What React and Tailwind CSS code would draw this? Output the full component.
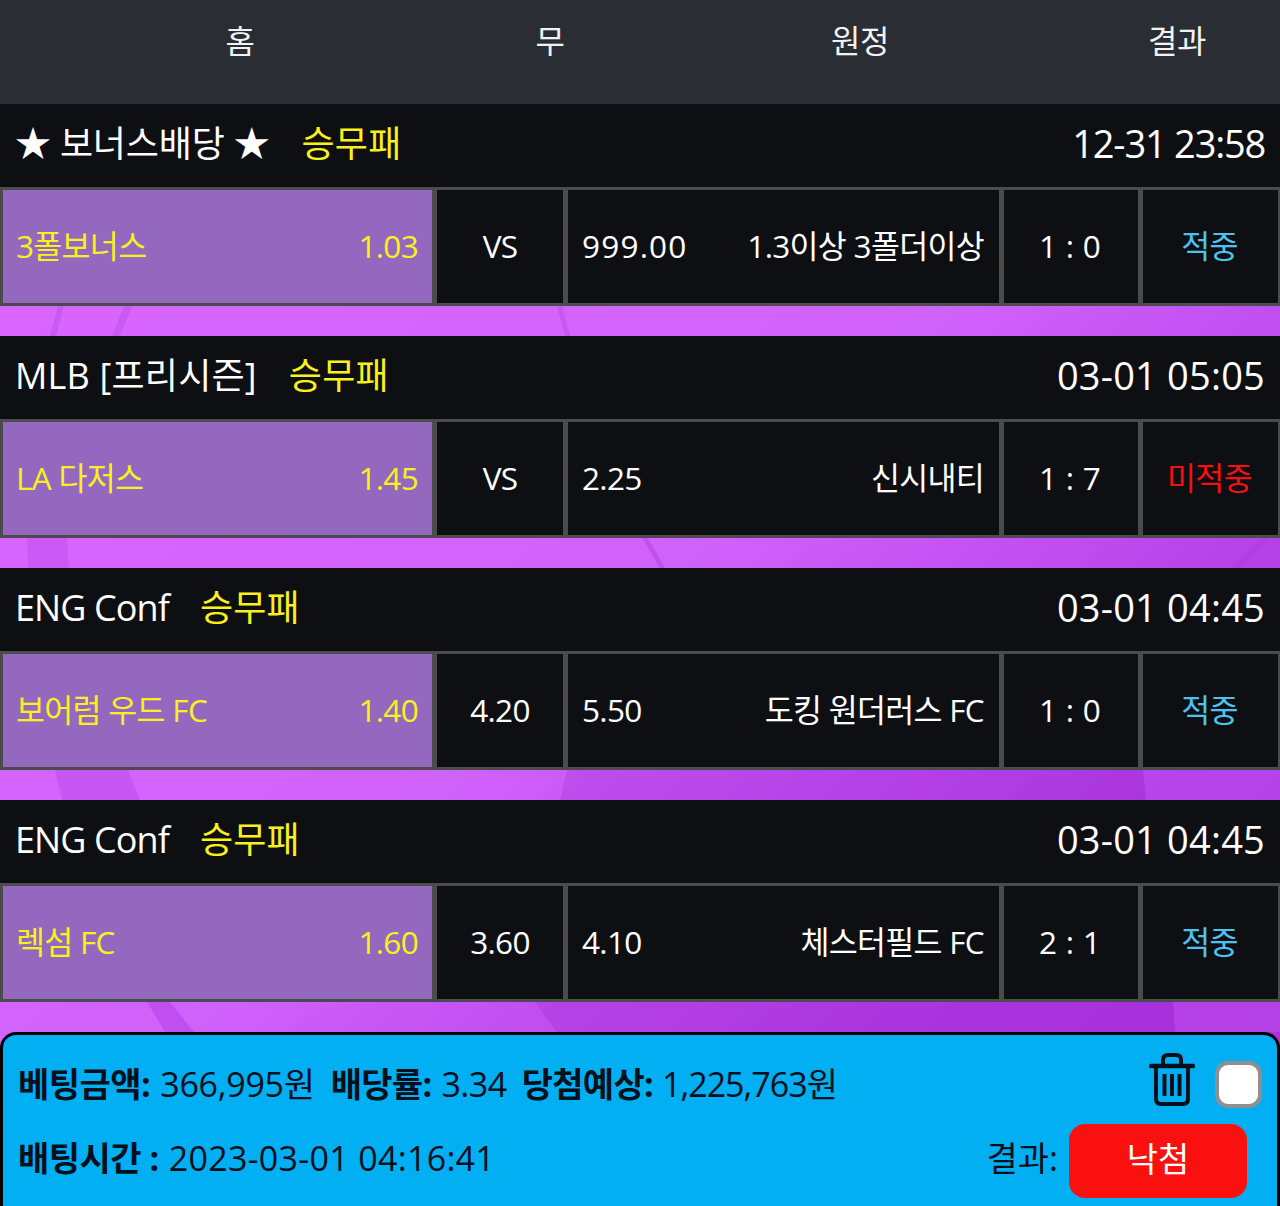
import React from "react";

const FONT = "font-['Open_Sans','Noto_Sans_CJK_KR',sans-serif]";

const games = [
  { league: "★ 보너스배당 ★", leagueClass: "tracking-[-0.2px]", typeClass: "ml-[32px]", type: "승무패", time: "12-31 23:58", timeClass: "tracking-[-1.2px]", home: "3폴보너스", homeOdds: "1.03", draw: "VS", awayOdds: "999.00", oddsClass: "tracking-[1.2px]", away: "1.3이상 3폴더이상", score: "1 : 0", result: "적중" },
  { league: "MLB [프리시즌]", leagueClass: "tracking-[0.2px]", typeClass: "ml-[32px]", type: "승무패", time: "03-01 05:05", timeClass: "tracking-[0.2px]", home: "LA 다저스", homeOdds: "1.45", draw: "VS", awayOdds: "2.25", oddsClass: "", away: "신시내티", score: "1 : 7", result: "미적중" },
  { league: "ENG Conf", leagueClass: "tracking-[-0.9px]", typeClass: "ml-[31px]", type: "승무패", time: "03-01 04:45", timeClass: "tracking-[0.2px]", home: "보어럼 우드 FC", homeOdds: "1.40", draw: "4.20", awayOdds: "5.50", oddsClass: "", away: "도킹 원더러스 FC", score: "1 : 0", result: "적중" },
  { league: "ENG Conf", leagueClass: "tracking-[-0.9px]", typeClass: "ml-[31px]", type: "승무패", time: "03-01 04:45", timeClass: "tracking-[0.2px]", home: "렉섬 FC", homeOdds: "1.60", draw: "3.60", awayOdds: "4.10", oddsClass: "", away: "체스터필드 FC", score: "2 : 1", result: "적중" },
];

function GameBlock({ game }) {
  return (
    <div>
      {/* league title */}
      <div className="flex h-[83px] items-center justify-between bg-[#0d0f12] pb-[4px] pl-[15px] pr-[15px] text-[36px] tracking-[-0.5px] text-white">
        <div className="flex items-center">
          <span className={game.leagueClass}>{game.league}</span>
          <span className={`${game.typeClass} tracking-[0.2px] text-[#f9f01c]`}>{game.type}</span>
        </div>
        <span className={`text-[38px] ${game.timeClass}`}>{game.time}</span>
      </div>

      {/* odds row */}
      <div className="flex h-[119px] gap-[5px] bg-[#4b4b4b] pb-[3px] pl-[3px] pr-[2px] pt-[3px] text-[31.5px] tracking-[-0.7px] text-white">
        <div className="flex w-[429px] items-center justify-between bg-[#9568c0] pb-[2px] pl-[13px] pr-[14px] text-[#f9f01c]">
          <span>{game.home}</span>
          <span>{game.homeOdds}</span>
        </div>
        <div className="flex w-[126px] items-center justify-center bg-[#0d0f12] pb-[2px]">{game.draw}</div>
        <div className="flex w-[431px] items-center justify-between bg-[#0d0f12] pb-[2px] pl-[14px] pr-[15px]">
          <span className={game.oddsClass}>{game.awayOdds}</span>
          <span>{game.away}</span>
        </div>
        <div className="flex w-[134px] items-center justify-center bg-[#0d0f12] pb-[2px] pr-[3px] [word-spacing:2px]">{game.score}</div>
        <div className={`flex flex-1 items-center justify-center bg-[#0d0f12] pb-[2px] pr-[2px] ${game.result === "적중" ? "text-[#4fc3f0]" : "text-[#f41010]"}`}>
          {game.result}
        </div>
      </div>

      <div className="h-[30px]" />
    </div>
  );
}

function BackgroundShapes() {
  // faint facets of the purple wallpaper showing through the gaps
  return (
    <svg className="absolute inset-0 h-full w-full" viewBox="0 0 1280 1206" preserveAspectRatio="none">
      <defs>
        <linearGradient id="wall" x1="0" y1="0" x2="1" y2="1">
          <stop offset="0" stopColor="#dc68ff" />
          <stop offset="0.5" stopColor="#d062fc" />
          <stop offset="0.8" stopColor="#ac36e0" />
          <stop offset="1" stopColor="#a830dc" />
        </linearGradient>
      </defs>
      <rect width="1280" height="1206" fill="url(#wall)" />
      <path d="M58 306 L50 336 L56 336 L64 306 Z M124 306 L112 336 L120 336 L132 306 Z M557 306 L565 336 L570 336 L562 306 Z" fill="#b545e6" opacity="0.4" />
      <path d="M27 538 L28 568 L69 568 L67 538 Z" fill="#b545e6" opacity="0.35" />
      <path d="M648 538 L665 568 L660 568 L642 538 Z M1262 538 L1230 568 L1240 568 L1272 538 Z" fill="#a93de0" opacity="0.45" />
      <path d="M55 770 L62 800 L140 800 L128 770 Z" fill="#a93de0" opacity="0.3" />
      <path d="M567 770 L560 800 L1146 800 L1143 770 Z" fill="#a32fd8" opacity="0.3" />
      <path d="M1143 770 L1146 800 L1280 800 L1280 770 Z" fill="#c04ff0" opacity="0.5" />
      <path d="M147 1002 L170 1002 L194 1032 L165 1032 Z M535 1002 L1173 1002 L1175 1032 L557 1032 Z" fill="#a32fd8" opacity="0.35" />
      <path d="M1173 1002 L1175 1032 L1280 1032 L1280 1002 Z" fill="#c04ff0" opacity="0.5" />
    </svg>
  );
}

function TrashIcon() {
  return (
    <svg width="46" height="54" viewBox="0 0 46 54" fill="none" stroke="#04101c" strokeWidth="4" strokeLinecap="round" strokeLinejoin="round">
      <path d="M2 13 H44" strokeWidth="4.5" />
      <path d="M14 12 V7 Q14 2 19 2 H27 Q32 2 32 7 V12" />
      <path d="M7 14 V46 Q7 51 12 51 H34 Q39 51 39 46 V14" />
      <path d="M15.500 21 V43 M23 21 V43 M30.500 21 V43" strokeLinecap="butt" />
    </svg>
  );
}

export default function App() {
  return (
    <div className={`relative h-[1206px] w-[1280px] overflow-hidden ${FONT}`}>
      <BackgroundShapes />
      <div className="relative">
        {/* column header */}
        <div className="flex h-[104px] bg-[#2a2d33] pt-[18px] text-[32px] leading-[46px] tracking-[-0.5px] text-[#f2f2f2]">
          <span className="w-[480px] text-center">홈</span>
          <span className="w-[140px] text-center">무</span>
          <span className="ml-[170px] w-[140px] text-center">원정</span>
          <span className="ml-[177px] w-[140px] text-center">결과</span>
        </div>

        {games.map((game, i) => (
          <GameBlock key={i} game={game} />
        ))}

        {/* bet summary */}
        <div className="h-[175px] rounded-t-[16px] border-[3px] border-b-0 border-black bg-[#01aff2] pl-[15px] pr-[15px] text-[34px] text-[#04101c]">
          <div className="flex h-[89px] items-center justify-between">
            <div className="flex items-center pt-[9px]">
              <b className="tracking-[-0.5px]">베팅금액:</b>
              <span className="ml-[10px] tracking-[-0.3px]">366,995원</span>
              <b className="ml-[16px] tracking-[-0.7px]">배당률:</b>
              <span className="ml-[10px] tracking-[-0.5px]">3.34</span>
              <b className="ml-[15px] tracking-[-0.7px]">당첨예상:</b>
              <span className="ml-[9px] tracking-[-1px]">1,225,763원</span>
            </div>
            <div className="flex items-center gap-[20px]">
              <TrashIcon />
              <div className="mt-[9px] h-[47px] w-[47px] rounded-[13px] border-[4px] border-[#8f8f8f] bg-white" />
            </div>
          </div>
          <div className="flex items-center justify-between">
            <div className="pb-[6px]">
              <b className="tracking-[-0.5px]">배팅시간 :</b>
              <span className="ml-[10px] tracking-[0.3px]">2023-03-01 04:16:41</span>
            </div>
            <div className="flex items-center gap-[11px] pr-[15px]">
              <span className="pb-[6px]">결과:</span>
              <div className="flex h-[74px] w-[178px] items-center justify-center rounded-[16px] bg-[#fb1010] pb-[4px] text-[34px] text-white">낙첨</div>
            </div>
          </div>
        </div>
      </div>
    </div>
  );
}
